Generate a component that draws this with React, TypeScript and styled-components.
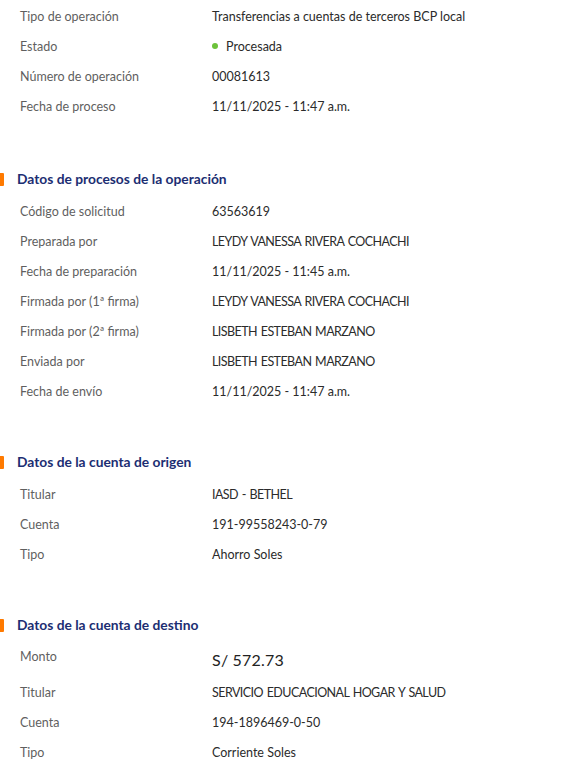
import React from "react";
import styled, { createGlobalStyle } from "styled-components";

const GlobalStyle = createGlobalStyle`
  body {
    margin: 0;
    background: #ffffff;
    font-family: Lato, "Liberation Sans", sans-serif;
  }
`;

interface Item {
  label: string;
  value: string;
  status?: boolean;
}

interface Section {
  title?: string;
  amount?: string;
  items: Item[];
}

const sections: Section[] = [
  {
    items: [
      { label: "Tipo de operación", value: "Transferencias a cuentas de terceros BCP local" },
      { label: "Estado", value: "Procesada", status: true },
      { label: "Número de operación", value: "00081613" },
      { label: "Fecha de proceso", value: "11/11/2025 - 11:47 a.m." },
    ],
  },
  {
    title: "Datos de procesos de la operación",
    items: [
      { label: "Código de solicitud", value: "63563619" },
      { label: "Preparada por", value: "LEYDY VANESSA RIVERA COCHACHI" },
      { label: "Fecha de preparación", value: "11/11/2025 - 11:45 a.m." },
      { label: "Firmada por (1ª firma)", value: "LEYDY VANESSA RIVERA COCHACHI" },
      { label: "Firmada por (2ª firma)", value: "LISBETH ESTEBAN MARZANO" },
      { label: "Enviada por", value: "LISBETH ESTEBAN MARZANO" },
      { label: "Fecha de envío", value: "11/11/2025 - 11:47 a.m." },
    ],
  },
  {
    title: "Datos de la cuenta de origen",
    items: [
      { label: "Titular", value: "IASD - BETHEL" },
      { label: "Cuenta", value: "191-99558243-0-79" },
      { label: "Tipo", value: "Ahorro Soles" },
    ],
  },
  {
    title: "Datos de la cuenta de destino",
    amount: "S/ 572.73",
    items: [
      { label: "Titular", value: "SERVICIO EDUCACIONAL HOGAR Y SALUD" },
      { label: "Cuenta", value: "194-1896469-0-50" },
      { label: "Tipo", value: "Corriente Soles" },
    ],
  },
];

// names in capitals sit tighter in the original font
const isCaps = (s: string) => /[A-Z]{4}/.test(s) && s === s.toUpperCase();

const App: React.FC = () => {
  return (
    <Page>
      <GlobalStyle />
      {sections.map((section, i) => (
        <Block key={i} $intro={!section.title}>
          {section.title && <Heading>{section.title}</Heading>}
          {section.amount && (
            <AmountRow>
              <Label>Monto</Label>
              <Amount>{section.amount}</Amount>
            </AmountRow>
          )}
          {section.items.map((item) => (
            <Row key={item.label}>
              <Label>{item.label}</Label>
              <Value $caps={isCaps(item.value)}>
                {item.status && <Dot />}
                {item.value}
              </Value>
            </Row>
          ))}
        </Block>
      ))}
    </Page>
  );
};

export default App;

const Page = styled.div`
  width: 568px;
  padding-top: 1px;
  display: flex;
  flex-direction: column;
  gap: 41px;
`;

const Block = styled.section<{ $intro?: boolean }>`
  display: flex;
  flex-direction: column;
  margin-bottom: ${(p) => (p.$intro ? "2px" : "0")};
`;

const Heading = styled.h3`
  position: relative;
  margin: 0 0 2px;
  height: 30px;
  line-height: 30px;
  padding-left: 17px;
  font-size: 13.8px;
  font-weight: 700;
  color: #1c2e72;
  &::before {
    content: "";
    position: absolute;
    left: 0;
    top: 9px;
    width: 4px;
    height: 13px;
    background: #ff7a00;
    border-radius: 0 1px 1px 0;
  }
`;

const Row = styled.div`
  display: flex;
  align-items: center;
  height: 30px;
  padding-left: 20px;
`;

const AmountRow = styled(Row)`
  align-items: flex-start;
  height: 35px;
`;

const Label = styled.div`
  width: 192px;
  flex-shrink: 0;
  line-height: 29px;
  font-size: 12.5px;
  color: #5f5f5f;
`;

const Value = styled.div<{ $caps?: boolean }>`
  display: flex;
  align-items: center;
  font-size: 12.5px;
  letter-spacing: ${(p) => (p.$caps ? "-0.55px" : "0")};
  word-spacing: ${(p) => (p.$caps ? "1px" : "0")};
  color: #2b2b2b;
`;

const Amount = styled.div`
  line-height: 35px;
  font-size: 16px;
  letter-spacing: 0.2px;
  color: #222222;
`;

const Dot = styled.span`
  width: 6px;
  height: 6px;
  border-radius: 50%;
  background: #6cc23a;
  margin: 0 8px 0 0;
`;
